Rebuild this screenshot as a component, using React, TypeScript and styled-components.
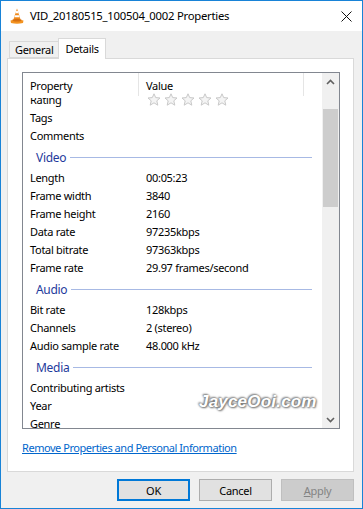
import React from "react";
import styled, { createGlobalStyle } from "styled-components";

const Global = createGlobalStyle`
  html, body { margin: 0; padding: 0; background: #ffffff; }
  * { box-sizing: border-box; }
`;

const FONT = `"Noto Sans", "Open Sans", Arial, sans-serif`;

const Window = styled.div`
  width: 363px;
  height: 509px;
  border: 1px solid #1883d7;
  background: #f0f0f0;
  display: flex;
  flex-direction: column;
  font-family: ${FONT};
  font-size: 11px;
  letter-spacing: -0.3px;
  color: #000;
  overflow: hidden;
`;

const TitleBar = styled.div`
  height: 30px;
  background: #ffffff;
  display: flex;
  align-items: center;
  padding-left: 7px;
  padding-right: 10px;
  flex-shrink: 0;
`;

const TitleText = styled.div`
  margin-left: 4px;
  font-size: 11.3px;
  letter-spacing: -0.25px;
  flex: 1;
  white-space: nowrap;
  padding-bottom: 1px;
`;

const Body = styled.div`
  flex: 1;
  display: flex;
  flex-direction: column;
  padding: 7px 8px 0 6px;
`;

const TabStrip = styled.div`
  display: flex;
  align-items: flex-end;
  height: 21px;
  padding-left: 2px;
  position: relative;
  z-index: 1;
  margin-bottom: -1px;
`;

const Tab = styled.div<{ $active?: boolean }>`
  height: ${(p) => (p.$active ? "21px" : "17px")};
  padding: ${(p) => (p.$active ? "0 6px 2px 6px" : "0 5px 0 5px")};
  margin-bottom: ${(p) => (p.$active ? "0" : "1px")};
  border: 1px solid #d9d9d9;
  border-bottom: ${(p) => (p.$active ? "none" : "1px solid #d9d9d9")};
  margin-left: ${(p) => (p.$active ? "-1px" : "0")};
  background: ${(p) => (p.$active ? "#ffffff" : "#f0f0f0")};
  display: flex;
  align-items: center;
  white-space: nowrap;
`;

const Panel = styled.div`
  height: 414px;
  background: #ffffff;
  border: 1px solid #d9d9d9;
  padding: 13px 13px 0 14px;
  display: flex;
  flex-direction: column;
`;

const ListBox = styled.div`
  width: 318px;
  height: 357px;
  border: 1px solid #828790;
  display: flex;
  position: relative;
  overflow: hidden;
`;

const ListMain = styled.div`
  flex: 1;
  display: flex;
  flex-direction: column;
  overflow: hidden;
`;

const Header = styled.div`
  height: 25px;
  display: flex;
  align-items: flex-start;
  background: #ffffff;
  flex-shrink: 0;
  position: relative;
  z-index: 1;
`;

const HeaderCell = styled.div<{ $w: number }>`
  width: ${(p) => p.$w}px;
  height: 23px;
  flex: none;
  padding-left: 7px;
  display: flex;
  align-items: center;
  border-right: 1px solid #e5e5e5;
  padding-top: 1px;
`;

const HeaderRest = styled.div`
  flex: 1;
`;

const Rows = styled.div`
  margin-top: -8px;
  display: flex;
  flex-direction: column;
`;

const Row = styled.div`
  height: 18px;
  display: flex;
  align-items: center;
`;

const Cell = styled.div<{ $w?: number }>`
  width: ${(p) => (p.$w ? `${p.$w}px` : "auto")};
  flex: ${(p) => (p.$w ? "none" : "1")};
  padding-left: 7px;
  white-space: nowrap;
`;

const GroupRow = styled.div`
  height: 24px;
  display: flex;
  align-items: center;
  padding: 2px 10px 0 13px;
  color: #1e3a9c;
  font-size: 12px;
`;

const GroupLine = styled.div`
  flex: 1;
  height: 1px;
  background: #a7b9e4;
  margin-left: 4px;
  margin-top: 1px;
`;

const Stars = styled.div`
  display: flex;
  gap: 3px;
  padding-left: 1px;
  position: relative;
  z-index: 2;
  margin-top: 1px;
`;

const ScrollBar = styled.div`
  width: 17px;
  background: #f0f0f0;
  display: flex;
  flex-direction: column;
  align-items: center;
`;

const ScrollArrow = styled.div`
  height: 17px;
  width: 17px;
  display: flex;
  align-items: center;
  justify-content: center;
`;

const ScrollTrack = styled.div`
  flex: 1;
  width: 100%;
  padding-top: 19px;
`;

const Thumb = styled.div`
  width: 15px;
  margin-left: 1px;
  height: 98px;
  background: #cdcdcd;
`;

const Watermark = styled.div`
  position: absolute;
  left: 176px;
  top: 319px;
  font-family: Arial, "Liberation Sans", sans-serif;
  font-style: italic;
  font-weight: bold;
  font-size: 17px;
  letter-spacing: 0.2px;
  color: #ffffff;
  text-shadow: 0 0 2px #6a6a6a, 1px 1px 2px #7a7a7a, -1px -1px 2px #8a8a8a;
`;

const LinkText = styled.a`
  margin-top: 11px;
  color: #0066cc;
  text-decoration: underline;
  letter-spacing: -0.45px;
  cursor: pointer;
  white-space: nowrap;
`;

const ButtonRow = styled.div`
  display: flex;
  justify-content: flex-end;
  gap: 9px;
  padding-top: 7px;
`;

const Button = styled.div<{ $default?: boolean; $disabled?: boolean }>`
  width: 73px;
  height: 22px;
  display: flex;
  align-items: center;
  justify-content: center;
  background: ${(p) => (p.$disabled ? "#cccccc" : "#e1e1e1")};
  border: ${(p) =>
    p.$default ? "2px solid #0078d7" : p.$disabled ? "1px solid #bfbfbf" : "1px solid #adadad"};
  color: ${(p) => (p.$disabled ? "#838383" : "#000")};
`;

const U = styled.span`
  text-decoration: underline;
`;

const VlcIcon = () => (
  <svg width="18" height="18" viewBox="0 0 18 18">
    <path d="M9 1.5 L5.6 12 L12.4 12 Z" fill="#f08a1c" />
    <path d="M8.2 4 L9.8 4 L10.5 6.2 L7.5 6.2 Z" fill="#ffffff" />
    <path d="M7 8.2 L11 8.2 L11.7 10.3 L6.3 10.3 Z" fill="#ffffff" />
    <path d="M2.5 13.5 Q9 11.5 15.5 13.5 L15 16 Q9 17.5 3 16 Z" fill="#f39321" />
    <path d="M4.5 12.5 Q9 11 13.5 12.5 L13 14 Q9 15 5 14 Z" fill="#d66f0f" />
  </svg>
);

const CloseIcon = () => (
  <svg width="11" height="11" viewBox="0 0 11 11">
    <path d="M0.5 0.5 L10.5 10.5 M10.5 0.5 L0.5 10.5" stroke="#111" strokeWidth="1" />
  </svg>
);

const Star = () => (
  <svg width="14" height="13" viewBox="0 0 14 13">
    <path
      d="M7 0.8 L8.7 4.6 L13 5 L9.8 7.8 L10.8 12.2 L7 9.8 L3.2 12.2 L4.2 7.8 L1 5 L5.3 4.6 Z"
      fill="#f4f4f4"
      stroke="#c8c8c8"
      strokeWidth="1"
    />
  </svg>
);

const Chevron = ({ up }: { up?: boolean }) => (
  <svg width="9" height="6" viewBox="0 0 9 6">
    <path
      d={up ? "M1 5 L4.5 1.5 L8 5" : "M1 1 L4.5 4.5 L8 1"}
      stroke="#606060"
      strokeWidth="1.6"
      fill="none"
    />
  </svg>
);

type Item =
  | { kind: "row"; name: string; value?: string; stars?: boolean }
  | { kind: "group"; name: string };

const items: Item[] = [
  { kind: "row", name: "Rating", stars: true },
  { kind: "row", name: "Tags" },
  { kind: "row", name: "Comments" },
  { kind: "group", name: "Video" },
  { kind: "row", name: "Length", value: "00:05:23" },
  { kind: "row", name: "Frame width", value: "3840" },
  { kind: "row", name: "Frame height", value: "2160" },
  { kind: "row", name: "Data rate", value: "97235kbps" },
  { kind: "row", name: "Total bitrate", value: "97363kbps" },
  { kind: "row", name: "Frame rate", value: "29.97 frames/second" },
  { kind: "group", name: "Audio" },
  { kind: "row", name: "Bit rate", value: "128kbps" },
  { kind: "row", name: "Channels", value: "2 (stereo)" },
  { kind: "row", name: "Audio sample rate", value: "48.000 kHz" },
  { kind: "group", name: "Media" },
  { kind: "row", name: "Contributing artists" },
  { kind: "row", name: "Year" },
  { kind: "row", name: "Genre" },
];

export default function App() {
  return (
    <>
      <Global />
      <Window>
        <TitleBar>
          <VlcIcon />
          <TitleText>VID_20180515_100504_0002 Properties</TitleText>
          <CloseIcon />
        </TitleBar>
        <Body>
          <TabStrip>
            <Tab>General</Tab>
            <Tab $active>Details</Tab>
          </TabStrip>
          <Panel>
            <ListBox>
              <ListMain>
                <Header>
                  <HeaderCell $w={116}>Property</HeaderCell>
                  <HeaderCell $w={165}>Value</HeaderCell>
                  <HeaderRest />
                </Header>
                <Rows>
                  {items.map((it, i) =>
                    it.kind === "group" ? (
                      <GroupRow key={i}>
                        {it.name}
                        <GroupLine />
                      </GroupRow>
                    ) : (
                      <Row key={i}>
                        <Cell $w={116}>{it.name}</Cell>
                        <Cell>
                          {it.stars ? (
                            <Stars>
                              <Star />
                              <Star />
                              <Star />
                              <Star />
                              <Star />
                            </Stars>
                          ) : (
                            it.value
                          )}
                        </Cell>
                      </Row>
                    )
                  )}
                </Rows>
              </ListMain>
              <ScrollBar>
                <ScrollArrow>
                  <Chevron up />
                </ScrollArrow>
                <ScrollTrack>
                  <Thumb />
                </ScrollTrack>
                <ScrollArrow>
                  <Chevron />
                </ScrollArrow>
              </ScrollBar>
              <Watermark>JayceOoi.com</Watermark>
            </ListBox>
            <LinkText>Remove Properties and Personal Information</LinkText>
          </Panel>
          <ButtonRow>
            <Button $default>OK</Button>
            <Button>Cancel</Button>
            <Button $disabled>
              <U>A</U>pply
            </Button>
          </ButtonRow>
        </Body>
      </Window>
    </>
  );
}
